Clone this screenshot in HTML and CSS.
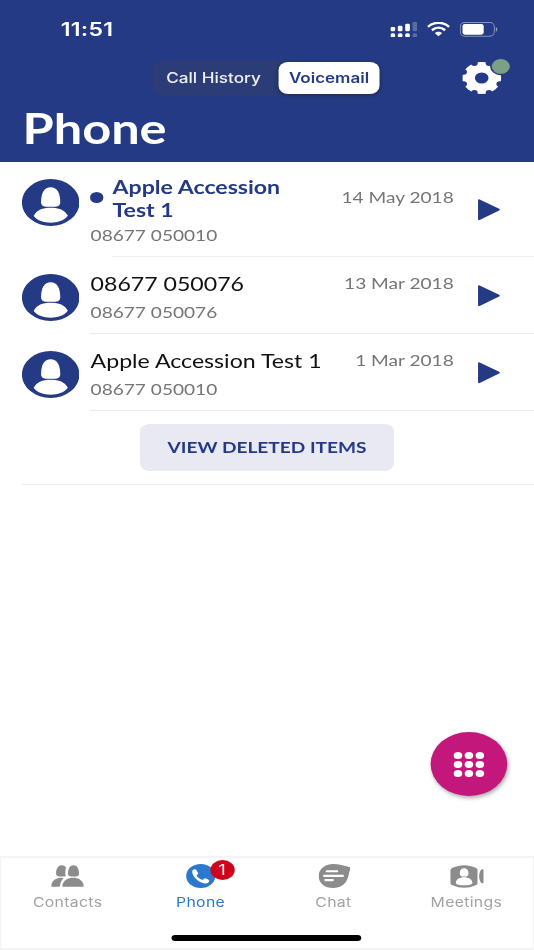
FILE: index.html
```html
<!DOCTYPE html>
<html lang="en">
<head>
  <meta charset="UTF-8" />
  <title>Phone - Voicemail</title>
  <link rel="stylesheet" href="styles.css">
</head>
<body>
  <svg class="defs" width="0" height="0">
    <symbol id="avatar" viewBox="0 0 174 142" preserveAspectRatio="none">
      <ellipse cx="87" cy="71" rx="87" ry="71" fill="#243a85" />
      <path fill="#fff" d="M58 70C58 42 68 25 87 25s29 17 29 45c0 10-8 14-17 14H75c-9 0-17-4-17-14z" />
      <path fill="#fff" d="M36 111C45 94 62 87 87 87s43 7 52 24c-12 15-31 21-52 21s-40-6-52-21z" />
    </symbol>
    <symbol id="play" viewBox="0 0 22 22" preserveAspectRatio="none">
      <path fill="#243a85" d="M0 1.3C0 .3.8 0 1.6.4l19.6 9.4c.9.5.9 1.2 0 1.6L1.6 21c-.8.4-1.6 0-1.6-1z" />
    </symbol>
  </svg>

  <div class="app">
    <header class="header">
      <div class="status">
        <span class="time">11:51</span>
        <div class="status-icons">
          <svg class="signal" viewBox="0 0 80 46" preserveAspectRatio="none" fill="#fff">
            <rect x="0" y="15" width="14" height="13" rx="4" />
            <rect x="22" y="11" width="14" height="17" rx="4" />
            <rect x="44" y="5" width="14" height="23" rx="4" />
            <rect x="66" y="0" width="14" height="28" rx="4" opacity=".25" />
            <rect x="0" y="34" width="14" height="12" rx="5" />
            <rect x="22" y="34" width="14" height="12" rx="5" />
            <rect x="44" y="34" width="14" height="12" rx="5" />
            <rect x="66" y="34" width="14" height="12" rx="5" opacity=".25" />
          </svg>
          <svg class="wifi" viewBox="0 0 70 43" preserveAspectRatio="none">
            <path d="M3 14.5C21-1.5 49-1.5 67 14.5M15 25c12-10 28-10 40 0" fill="none" stroke="#fff" stroke-width="7.5" />
            <path d="M24 34c6-6 16-6 22 0L35 43z" fill="#fff" />
          </svg>
          <svg class="battery" viewBox="0 0 112 44" preserveAspectRatio="none">
            <rect x="1.5" y="1.5" width="101" height="41" rx="13" fill="none" stroke="#fff" stroke-opacity=".45" stroke-width="3" />
            <rect x="8" y="6" width="63" height="32" rx="7" fill="#fff" />
            <path d="M107 15c7 3 7 11 0 14z" fill="#fff" opacity=".5" />
          </svg>
        </div>
      </div>
      <div class="toolbar">
        <div class="segment">
          <span class="seg">Call History</span>
          <span class="seg active">Voicemail</span>
        </div>
        <svg class="gear" viewBox="0 0 40 36">
          <mask id="teeth">
            <circle cx="16" cy="19" r="16" fill="#fff" />
            <g fill="#000">
              <circle cx="22" cy="4.2" r="2.7" />
              <circle cx="30.8" cy="13" r="2.7" />
              <circle cx="30.8" cy="25" r="2.7" />
              <circle cx="22" cy="33.8" r="2.7" />
              <circle cx="10" cy="33.8" r="2.7" />
              <circle cx="1.2" cy="25" r="2.7" />
              <circle cx="1.2" cy="13" r="2.7" />
              <circle cx="10" cy="4.2" r="2.7" />
              <circle cx="16" cy="19" r="5.6" />
              <circle cx="31.7" cy="7.4" r="8.8" />
            </g>
          </mask>
          <rect width="34" height="36" fill="#fff" mask="url(#teeth)" />
          <circle cx="31.7" cy="7.4" r="7.4" fill="#7b9f87" />
        </svg>
      </div>
      <h1>Phone</h1>
    </header>

    <main class="list">
      <div class="item unread">
        <svg class="avatar"><use href="#avatar" /></svg>
        <div class="info">
          <div class="name"><i class="dot"></i><span>Apple Accession Test 1</span></div>
          <div class="number">08677 050010</div>
        </div>
        <span class="date">14 May 2018</span>
        <svg class="play"><use href="#play" /></svg>
      </div>
      <div class="item">
        <svg class="avatar"><use href="#avatar" /></svg>
        <div class="info">
          <div class="name">08677 050076</div>
          <div class="number">08677 050076</div>
        </div>
        <span class="date">13 Mar 2018</span>
        <svg class="play"><use href="#play" /></svg>
      </div>
      <div class="item">
        <svg class="avatar"><use href="#avatar" /></svg>
        <div class="info">
          <div class="name">Apple Accession Test 1</div>
          <div class="number">08677 050010</div>
        </div>
        <span class="date">1 Mar 2018</span>
        <svg class="play"><use href="#play" /></svg>
      </div>
      <div class="deleted">
        <button class="view-deleted">VIEW DELETED ITEMS</button>
      </div>
    </main>

    <button class="fab">
      <i></i><i></i><i></i>
      <i></i><i></i><i></i>
      <i></i><i></i><i></i>
    </button>

    <nav class="tabs">
      <div class="tab">
        <svg class="ic-contacts" viewBox="0 0 99 65" preserveAspectRatio="none" fill="#8c8c8c">
          <path d="M51 26C51 10 57 1 67.500 1S84 10 84 26c0 6-4 8-9 8H60c-5 0-9-2-9-8z" />
          <path d="M34 59c5-14 16-21 33-21 16 0 26 7 31 20 1 4 0 6-4 6H38c-4 0-5-2-4-5z" />
          <path d="M15 26C15 10 22 1 32 1c6 0 10 2 13 6-2 8-3 17-1 26-3 1-5 1-7 1H24c-5 0-9-2-9-8z" />
          <path d="M1 58c4-13 14-20 32-20l5 1c-7 5-10 13-11 22l-2 3H5c-4 0-5-2-4-6z" />
        </svg>
        <span>Contacts</span>
      </div>
      <div class="tab active">
        <svg class="ic-phone" viewBox="0 0 87 72" preserveAspectRatio="none">
          <ellipse cx="43.500" cy="36" rx="43.500" ry="36" fill="#2b78cd" />
          <path fill="#fff" d="M19 19c5-4 10-4 12 0l5 8c1 3-3 5-5 8 5 6 11 10 18 13 3-3 6-6 9-5l9 4c4 2 2 7-2 10-8 4-22-1-32-9C23 40 16 29 19 19z" />
        </svg>
        <b class="badge">1</b>
        <span>Phone</span>
      </div>
      <div class="tab">
        <svg class="ic-chat" viewBox="0 0 94 73" preserveAspectRatio="none">
          <path fill="#8c8c8c" d="M43 0c18 0 32 6 48 9 3 1 4 3 3 6-4 9-4 17-7 26-6 20-22 32-44 32C18 73 0 58 0 37S18 0 43 0z" />
          <path d="M24 22h31M16 36h56M20 49h22" fill="none" stroke="#fff" stroke-width="6.500" stroke-linecap="round" />
        </svg>
        <span>Chat</span>
      </div>
      <div class="tab">
        <svg class="ic-meet" viewBox="0 0 100 69" preserveAspectRatio="none">
          <path fill="#8c8c8c" d="M8 8c20-10 48-10 68 0 5 2 6 5 6 9v36c0 4-1 6-6 8-20 10-48 10-68 0-5-2-7-4-7-8V17c0-4 2-7 7-9zM93 14c4-2 7-1 7 2v36c0 3-3 4-7 2-8-9-8-31 0-40z" />
          <path fill="#fff" d="M29 25c0-10 5-15 13-15s13 5 13 15c0 6-3 9-7 10v2c11 2 17 7 19 16-1 3-3 5-7 6-11 2-25 2-36 0-4-1-6-3-7-6 2-9 8-14 19-16v-2c-4-1-7-4-7-10z" />
          <path d="M27 38c9-4 21-4 30 0" fill="none" stroke="#8c8c8c" stroke-width="2" />
        </svg>
        <span>Meetings</span>
      </div>
      <div class="home-bar"></div>
    </nav>
  </div>
</body>
</html>
```
FILE: styles.css
```css
* { box-sizing: border-box; }
body { margin: 0; background: #fff; overflow: hidden; }
.defs { position: absolute; }

.app {
  width: 439px; height: 950px; position: relative;
  display: flex; flex-direction: column;
  transform: scaleX(1.2164); transform-origin: 0 0;
  font-family: Lato, sans-serif; background: #fff;
}
svg { display: block; flex: none; }
button { border: none; padding: 0; font-family: inherit; }

.header { height: 162px; background: #243a85; color: #fff; }
.status {
  height: 59px; padding: 0 30px 0 50px;
  display: flex; align-items: center; justify-content: space-between;
}
.time { font: 600 19px/22px Inter, sans-serif; letter-spacing: 0.2px; }
.status-icons { display: flex; align-items: center; gap: 8px; }
.signal { width: 22px; height: 15.300px; }
.wifi { width: 19px; height: 14.300px; }
.battery { width: 31px; height: 14.700px; }

.toolbar { display: flex; height: 38px; padding-left: 125px; align-items: flex-start; }
.segment {
  width: 188px; height: 36px; margin-top: 1px; padding: 2px 1px;
  display: flex; border-radius: 10px; background: #2b3c76;
}
.seg {
  flex: 1; text-align: center; font: 500 14.100px/32px Inter, sans-serif; color: #f0f1f5;
  padding-right: 4px;
}
.seg.active {
  flex: 0 0 83px; background: #fff; color: #243a85; border-radius: 8px; padding: 0;
  font-weight: 600; font-size: 14px; box-shadow: 0 1px 4px rgba(0,0,0,0.3);
}
.gear { width: 40px; height: 36px; margin-left: 67px; }
h1 { margin: 5px 0 0 18.500px; font-size: 41.500px; line-height: 52px; font-weight: 700; }

.item { display: flex; height: 77px; padding: 17px 27px 0 18px; position: relative; }
.item::after {
  content: ""; position: absolute; left: 74px; right: 0; bottom: 0;
  height: 1px; background: #ededed;
}
.avatar { width: 47.300px; height: 47px; }
.info { flex: 1; margin-left: 9.200px; }
.name { font-size: 19px; line-height: 23px; margin-top: -2px; color: #111; white-space: nowrap; }
.number { font-size: 15.700px; line-height: 20px; margin-top: 7px; color: #757575; }
.date { font-size: 15.700px; line-height: 20px; margin-top: -1px; color: #757575; }
.play { width: 18px; height: 22px; margin: 11px 1px 0 20px; }

.unread { height: 95px; }
.unread::after { left: 92px; }
.unread .name {
  display: flex; font-weight: 700; color: #243a85; white-space: normal;
  width: 170px; margin-top: -4px;
}
.unread .number { margin-top: 4px; }
.unread .date { margin-top: 8px; }
.unread .play { margin-top: 20px; }
.dot { flex: none; width: 11px; height: 11px; margin: 17px 7px 0 0; border-radius: 50%; background: #243a85; }

.deleted { height: 74px; margin-left: 18px; padding: 13px 0 0 97px; border-bottom: 1px solid #ededed; }
.view-deleted {
  width: 209px; height: 47px; border-radius: 8px; background: #e9e9f4; padding-bottom: 2px;
  color: #243a85; font-size: 15.700px; font-weight: 700;
}

.fab {
  position: absolute; left: 353.500px; top: 732px; width: 63px; height: 64px;
  border-radius: 50%; background: #c4177c; box-shadow: 1px 2px 4px rgba(0,0,0,0.35);
  display: grid; grid-template-columns: repeat(3, 7px); gap: 2px;
  place-content: center;
}
.fab i { width: 7px; height: 7px; border-radius: 50%; background: #fff; }

.tabs {
  height: 94px; margin-top: auto; border: 2px solid #f4f4f4; position: relative;
  border-left-width: 1.500px; border-right-width: 1.500px;
  display: grid; grid-template-columns: repeat(4, 1fr);
}
.tab {
  display: flex; flex-direction: column; align-items: center; position: relative;
  color: #a2a2a2; font: 13px/16px Inter, sans-serif; letter-spacing: 0.25px;
}
.tab.active { color: #2b78cd; }
.tab span { position: absolute; top: 36px; }
.ic-contacts { width: 27px; height: 22px; margin-top: 7px; }
.ic-phone { width: 24px; height: 24px; margin-top: 6px; }
.ic-chat { width: 26px; height: 24px; margin: 6px 0 0 1px; }
.ic-meet { width: 27.500px; height: 23px; margin: 7px 0 0 1px; }
.badge {
  position: absolute; left: 62.500px; top: 1.500px; width: 20px; height: 20px;
  border-radius: 50%; background: #d0021b; color: #fff;
  text-align: center; font-size: 14.500px; line-height: 20px; font-weight: 400;
}
.home-bar {
  position: absolute; left: 140px; bottom: 7px; width: 156px; height: 6px;
  border-radius: 3px; background: #000;
}
```
